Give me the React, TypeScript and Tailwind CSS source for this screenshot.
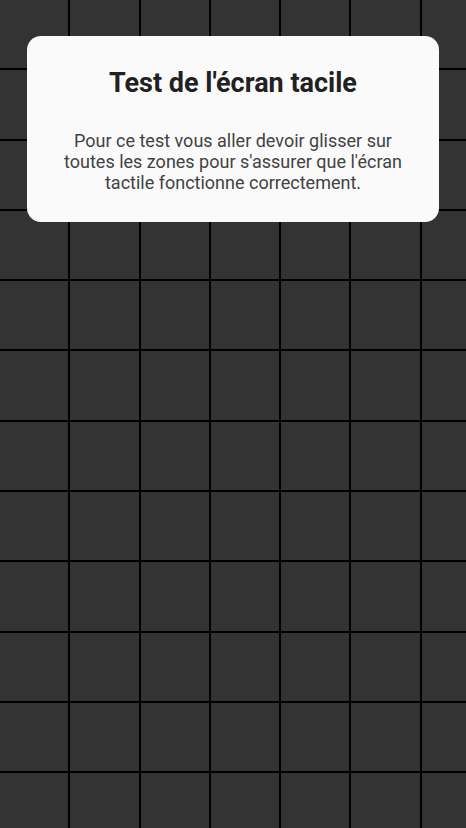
import React from "react";

export default function App() {
  const cells = Array.from({ length: 7 * 12 });
  return (
    <div className="relative w-[466px] h-[828px] overflow-hidden bg-black" style={{ fontFamily: "Roboto, 'Noto Sans', sans-serif" }}>
      <div className="grid grid-cols-[repeat(7,68.3px)] auto-rows-[68.3px] gap-[2px]">
        {cells.map((_, i) => (
          <div key={i} className="bg-[#333333]" />
        ))}
      </div>
      <div className="absolute left-[27px] top-[36px] w-[412px] h-[186px] rounded-[14px] bg-[#fafafa] flex flex-col items-center pt-[31px] px-2">
        <h1 className="text-[27px] leading-[32px] font-bold text-[#212121] whitespace-nowrap">Test de l'écran tacile</h1>
        <p className="mt-[31px] text-[18px] leading-[21px] text-[#424242] text-center whitespace-nowrap">
          Pour ce test vous aller devoir glisser sur
          <br />
          toutes les zones pour s'assurer que l'écran
          <br />
          tactile fonctionne correctement.
        </p>
      </div>
    </div>
  );
}
